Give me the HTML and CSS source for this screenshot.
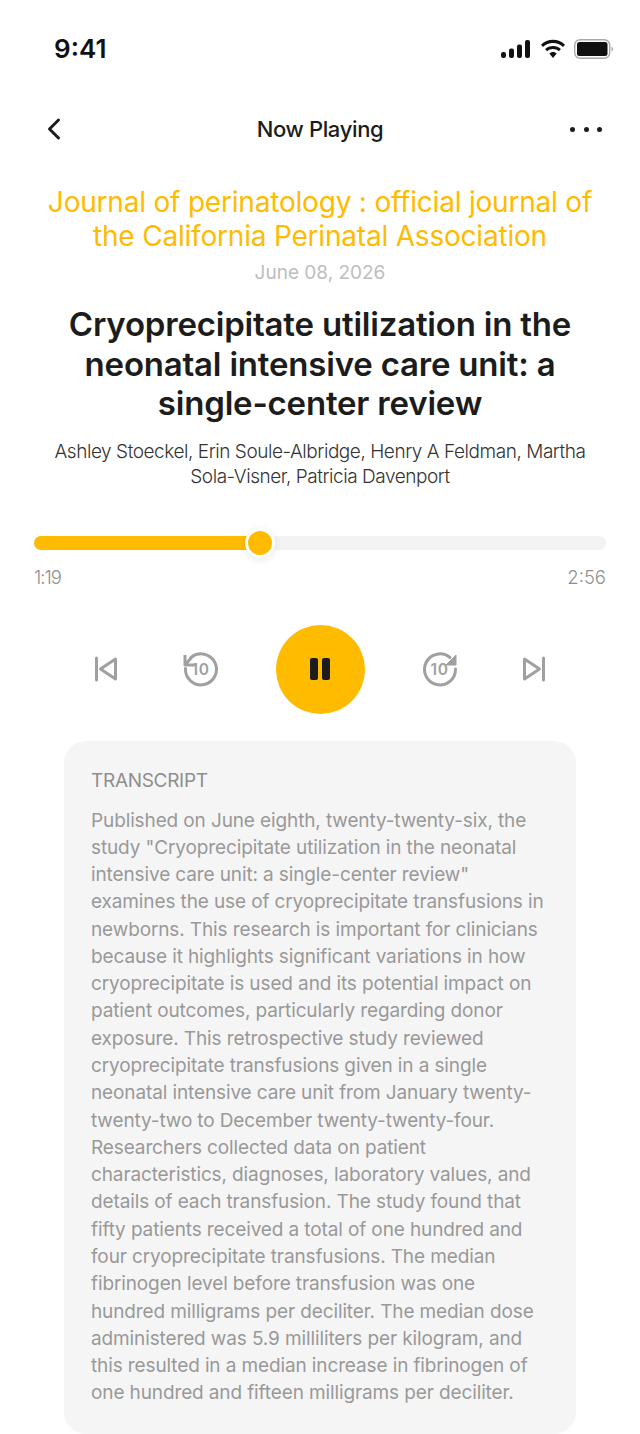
FILE: index.html
```html
<!DOCTYPE html>
<html lang="en">
<head>
<meta charset="utf-8">
<title>Now Playing</title>
<link rel="stylesheet" href="styles.css">
</head>
<body>
<div class="page">
  <div class="status">
    <span class="time">9:41</span>
    <div class="status-icons">
      <svg width="30" height="18" viewBox="0 0 30 18"><rect x="0" y="12" width="5" height="6" rx="2.200"/><rect x="8" y="8.500" width="5" height="9.500" rx="2"/><rect x="16" y="4.500" width="5" height="13.500" rx="2"/><rect x="24" y="0" width="5" height="18" rx="2"/></svg>
      <svg width="28" height="20" viewBox="0 0 28 20"><path d="M14 4c3.900 0 7.400 1.500 10 4l2-2.200C22.800 2.600 18.600.8 14 .8S5.200 2.600 2 5.800L4 8c2.600-2.500 6.100-4 10-4z"/><path d="M14 10c2.300 0 4.300.9 5.900 2.300l2-2.200C19.800 8.100 17 7 14 7s-5.800 1.100-7.900 3.100l2 2.200C9.700 10.900 11.700 10 14 10z"/><path d="M14 13c-1.400 0-2.700.6-3.700 1.500L14 19l3.700-4.500C16.700 13.600 15.400 13 14 13z"/></svg>
      <svg width="40" height="20" viewBox="0 0 40 20"><rect x=".7" y=".7" width="35" height="18.600" rx="5.500" fill="none" stroke="#a8a8a8" stroke-width="1.400"/><rect x="3" y="3" width="30.500" height="14" rx="2.500"/><path d="M37.500 7.500v5c1-.4 1.600-1.400 1.600-2.500s-.6-2.100-1.600-2.500z" fill="#a8a8a8"/></svg>
    </div>
  </div>
  <div class="nav">
    <svg class="nav-icon" width="16" height="24" viewBox="0 0 16 24"><path d="M12.500 3 3.500 12l9 9" fill="none" stroke="#1c1c1c" stroke-width="3" stroke-linecap="round" stroke-linejoin="round"/></svg>
    <span class="nav-title">Now Playing</span>
    <div class="dots"><i></i><i></i><i></i></div>
  </div>
  <div class="journal">Journal of perinatology : official journal of the California Perinatal Association</div>
  <div class="date">June 08, 2026</div>
  <h1 class="title">Cryoprecipitate utilization in the neonatal intensive care unit: a single-center review</h1>
  <div class="authors">Ashley Stoeckel, Erin Soule-Albridge, Henry A Feldman, Martha Sola-Visner, Patricia Davenport</div>
  <div class="progress">
    <div class="track"><div class="fill" style="width:226px"></div><div class="knob"></div></div>
    <div class="times"><span class="elapsed">1:19</span><span>2:56</span></div>
  </div>
  <div class="controls">
    <svg class="prev" width="30" height="30" viewBox="0 0 30 30"><path d="M5.500 4v22M24.500 5 9.500 15l15 10z" fill="none" stroke="#a0a0a0" stroke-width="3" stroke-linejoin="round" stroke-linecap="round"/></svg>
    <div class="skip">
      <svg width="38" height="38" viewBox="0 0 38 38"><path d="M9 7.500A15.500 15.500 0 1 1 3.500 18.500" fill="none" stroke="#a0a0a0" stroke-width="3" stroke-linecap="round"/><path d="M3 5v10h10M3 15l6.500-7.500" fill="none" stroke="#a0a0a0" stroke-width="3" stroke-linejoin="round"/></svg>
      <span>10</span>
    </div>
    <div class="play"><i></i><i></i></div>
    <div class="skip">
      <svg width="38" height="38" viewBox="0 0 38 38"><path d="M29 7.500A15.500 15.500 0 1 0 34.500 19" fill="none" stroke="#a0a0a0" stroke-width="3" stroke-linecap="round"/><path d="M35 5v10H25z" fill="#a0a0a0" stroke="#a0a0a0" stroke-width="1" stroke-linejoin="round"/></svg>
      <span>10</span>
    </div>
    <svg class="next" width="30" height="30" viewBox="0 0 30 30"><path d="M24.500 4v22M5.500 5l15 10-15 10z" fill="none" stroke="#a0a0a0" stroke-width="3" stroke-linejoin="round" stroke-linecap="round"/></svg>
  </div>
  <div class="card">
    <div class="card-head">TRANSCRIPT</div>
    <p class="card-text">Published on June eighth, twenty-twenty-six, the<br>study "Cryoprecipitate utilization in the neonatal<br>intensive care unit: a single-center review"<br>examines the use of cryoprecipitate transfusions in<br>newborns. This research is important for clinicians<br>because it highlights significant variations in how<br>cryoprecipitate is used and its potential impact on<br>patient outcomes, particularly regarding donor<br>exposure. This retrospective study reviewed<br>cryoprecipitate transfusions given in a single<br>neonatal intensive care unit from January twenty-<br>twenty-two to December twenty-twenty-four.<br>Researchers collected data on patient<br>characteristics, diagnoses, laboratory values, and<br>details of each transfusion. The study found that<br>fifty patients received a total of one hundred and<br>four cryoprecipitate transfusions. The median<br>fibrinogen level before transfusion was one<br>hundred milligrams per deciliter. The median dose<br>administered was 5.9 milliliters per kilogram, and<br>this resulted in a median increase in fibrinogen of<br>one hundred and fifteen milligrams per deciliter.</p>
  </div>
</div>
</body>
</html>
```
FILE: styles.css
```css
* { box-sizing: border-box; }
html, body { margin: 0; padding: 0; background: #fff; }
.page { width: 640px; height: 1434px; overflow: hidden; font-family: "Inter", "Noto Sans", sans-serif; display: flex; flex-direction: column; }
.status { height: 99px; padding: 34px 26px 0 54px; display: flex; justify-content: space-between; align-items: flex-start; }
.time { font-size: 26px; font-weight: 600; line-height: 30px; color: #111; letter-spacing: 0; }
.status-icons { display: flex; align-items: center; gap: 7.500px; padding-top: 5px; }
.status-icons svg { display: block; fill: #111; }
.nav { height: 60px; padding: 0 38px 0 46px; display: flex; justify-content: space-between; align-items: center; position: relative; }
.nav-title { position: absolute; left: 0; right: 0; text-align: center; font-size: 22px; font-weight: 500; color: #1c1c1c; letter-spacing: -.35px; }
.dots { display: flex; gap: 8.500px; }
.dots i { width: 5px; height: 5px; border-radius: 50%; background: #1c1c1c; }
.journal { margin-top: 26px; padding: 0 40px; text-align: center; font-size: 28px; line-height: 34px; color: #ffbb00; letter-spacing: -.2px; }
.date { margin-top: 7px; text-align: center; font-size: 19px; line-height: 26px; color: #bdbdbd; }
.title { margin: 19px 0 0; padding: 0 40px; text-align: center; font-size: 33px; line-height: 39.500px; font-weight: 600; color: #1c1c1c; letter-spacing: -.2px; }
.authors { margin-top: 15px; padding: 0 40px; text-align: center; font-size: 19px; line-height: 25px; font-weight: 300; color: #333; letter-spacing: -.45px; }
.progress { margin-top: 47px; padding: 0 34px; }
.track { height: 14px; border-radius: 7px; background: #f3f3f3; position: relative; }
.fill { height: 14px; border-radius: 7px; background: #ffbb00; }
.knob { position: absolute; left: 211px; top: -8px; width: 30px; height: 30px; border-radius: 50%; background: #ffbb00; border: 3px solid #fff; box-shadow: 0 2px 9px rgba(0,0,0,.09); }
.times { margin-top: 16px; display: flex; justify-content: space-between; font-size: 18.500px; font-weight: 300; line-height: 22px; color: #8f8f8f; }
.elapsed { letter-spacing: -1px; }
.controls { margin-top: 37px; display: flex; justify-content: center; align-items: center; gap: 56px; }
.controls svg { display: block; }
.prev { margin-right: 4.500px; }
.next { margin-left: 4.500px; }
.skip { position: relative; width: 38px; height: 38px; }
.skip span { position: absolute; inset: 0; display: flex; align-items: center; justify-content: center; font-size: 15.500px; font-weight: 600; letter-spacing: .5px; color: #a0a0a0; }
.play { width: 89px; height: 89px; border-radius: 50%; background: #ffbb00; display: flex; align-items: center; justify-content: center; gap: 4px; }
.play i { width: 8px; height: 22px; border-radius: 2px; background: #1c1c1c; }
.card { margin: 27px 64px 0; background: #f5f5f5; border-radius: 22px; padding: 28px 27px 0; height: 693px; }
.card-head { font-size: 19px; line-height: 24px; color: #8e8e8e; letter-spacing: -.3px; }
.card-text { margin: 14px 0 0; font-size: 19px; line-height: 27.280px; color: #999; white-space: nowrap; letter-spacing: -.12px; }
```
